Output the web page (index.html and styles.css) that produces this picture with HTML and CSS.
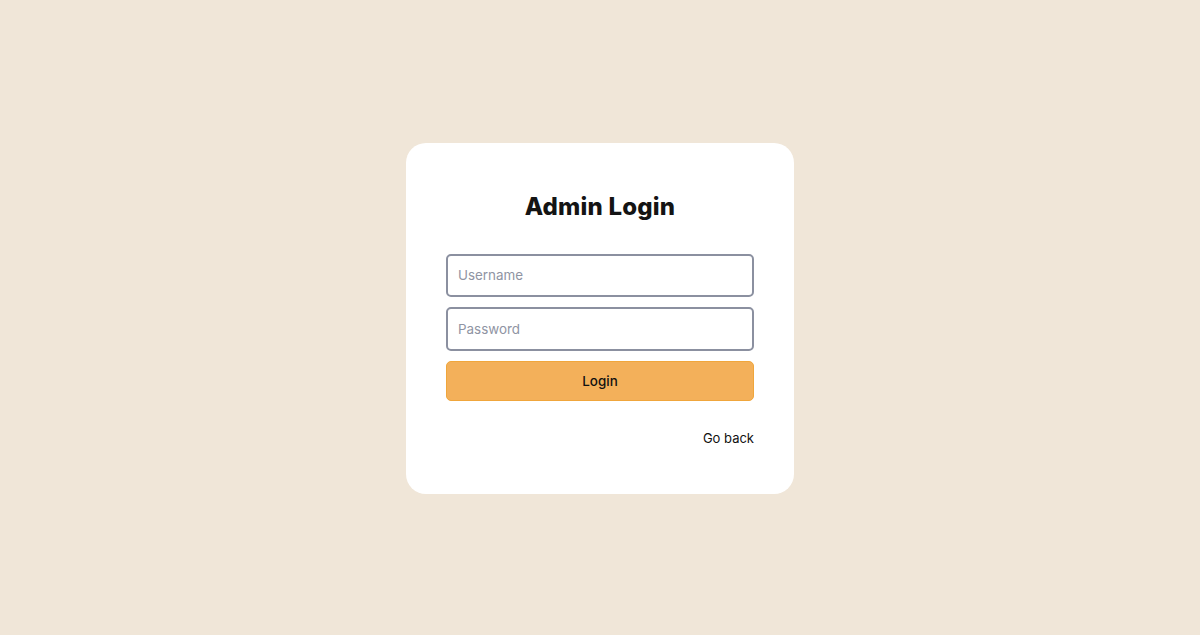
FILE: index.html
```html
<!DOCTYPE html>
<html lang="en">
<head>
<meta charset="utf-8">
<title>Admin Login</title>
<link rel="stylesheet" href="styles.css">
</head>
<body>
<main class="page">
  <form class="card">
    <h1 class="title">Admin Login</h1>
    <div class="fields">
      <input class="input" type="text" placeholder="Username">
      <input class="input" type="password" placeholder="Password">
      <button class="btn" type="button">Login</button>
    </div>
    <div class="footer">
      <a class="back" href="#">Go back</a>
    </div>
  </form>
</main>
</body>
</html>
```
FILE: styles.css
```css
* { box-sizing: border-box; }
html, body {
  margin: 0;
  padding: 0;
  height: 100%;
}
body {
  background: #f0e6d8;
  font-family: Inter, "Noto Sans", sans-serif;
  color: #111;
}
.page {
  min-height: 635px;
  padding-top: 1px;
  display: flex;
  align-items: center;
  justify-content: center;
}
.card {
  width: 388px;
  height: 351px;
  background: #ffffff;
  border-radius: 20px;
  padding: 48px 40px 40px;
  display: flex;
  flex-direction: column;
}
.title {
  margin: 0;
  text-align: center;
  font-size: 24px;
  line-height: 32px;
  font-weight: 800;
  color: #141414;
  letter-spacing: 0.2px;
}
.fields {
  margin-top: 31px;
  display: flex;
  flex-direction: column;
  gap: 10px;
}
.input {
  height: 43.5px;
  border: 2px solid #8b90a0;
  border-radius: 5px;
  padding: 0 10px;
  font-family: inherit;
  font-size: 13.4px;
  color: #111;
  background: #fff;
  outline: none;
}
.input::placeholder { color: #8f94a3; }
.btn {
  height: 40px;
  border: 1px solid #f0a63c;
  border-radius: 5px;
  background: #f3b05a;
  font-family: inherit;
  font-size: 13.4px;
  font-weight: 500;
  color: #111;
}
.footer {
  margin-top: 28px;
  display: flex;
  justify-content: flex-end;
}
.back {
  font-size: 13px;
  line-height: 18px;
  color: #111;
  text-decoration: none;
}
```
